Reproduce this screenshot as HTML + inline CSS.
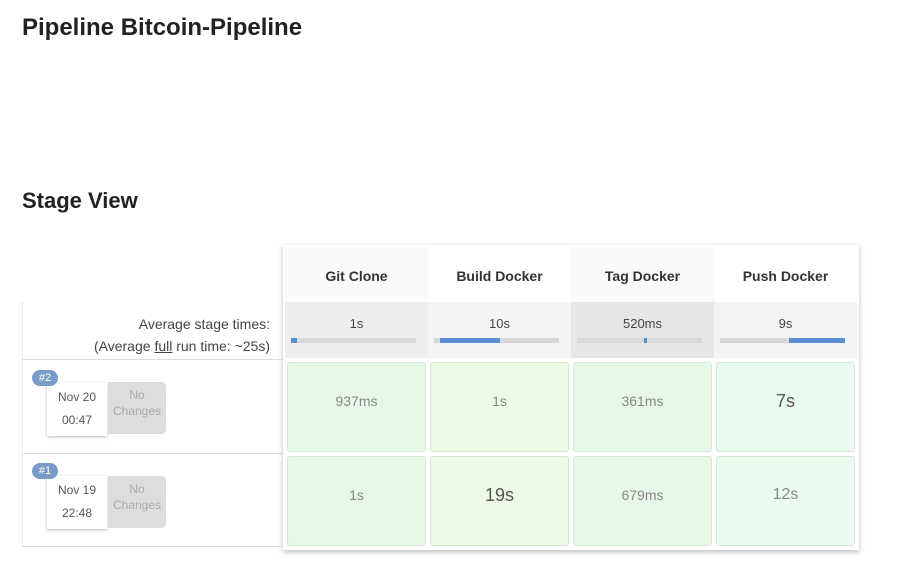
<!DOCTYPE html>
<html><head><meta charset="utf-8"><style>
body{margin:0;width:905px;height:568px;background:#fff;font-family:"Liberation Sans",sans-serif;position:relative;overflow:hidden}
.a{position:absolute}
h1{position:absolute;left:22px;top:14px;margin:0;font-size:24px;font-weight:bold;color:#222}
h2{position:absolute;left:22px;top:188px;margin:0;font-size:22px;font-weight:bold;color:#222}
.hdr{top:247px;height:55px;width:143px;text-align:center;line-height:58px;font-size:14px;font-weight:bold;color:#333;background:#fafafa}
.avg{top:302px;height:56px;width:143px;background:#eeeeee;text-align:center;font-size:13px;color:#444}
.avg .bar{position:absolute;left:6px;right:12px;top:36px;height:5px;background:#d8d8d8}
.avg .fill{position:absolute;top:0;height:5px;background:#5b8fd4}
.cell{width:137px;height:88px;border:1px solid #d8e8d8;border-radius:3px;background:#e6f9e6;text-align:center;color:#888;font-size:14px;line-height:76px}
.big{font-size:18px;color:#555}
.badge{background:#7a9bc7;color:#fff;font-size:11px;border-radius:8px;width:26px;height:16px;line-height:16px;text-align:center;z-index:2}
.date{width:60px;height:50px;background:#fff;box-shadow:0 1px 3px #bbb;font-size:12px;color:#555;text-align:center;line-height:23px;padding-top:3px}
.nc{width:58px;background:#ddd;border-radius:0 4px 4px 0;color:#aaa;font-size:12px;text-align:center}
</style></head><body>
<h1>Pipeline Bitcoin-Pipeline</h1>
<h2>Stage View</h2>
<div class="a" style="left:283px;top:245px;width:576px;height:305px;box-shadow:0 2px 5px #bbb;background:#fff"></div>
<div class="a hdr" style="left:285px">Git Clone</div>
<div class="a hdr" style="left:428px;background:#fff">Build Docker</div>
<div class="a hdr" style="left:571px">Tag Docker</div>
<div class="a hdr" style="left:714px;background:#fff">Push Docker</div>
<div class="a" style="left:22px;top:302px;width:248px;text-align:right;font-size:14px;color:#444;line-height:22px;padding-top:11px">Average stage times:<br>(Average <u>full</u> run time: ~25s)</div>
<div class="a avg" style="left:285px;line-height:44px">1s<div class="bar"><div class="fill" style="left:0;width:6px"></div></div></div>
<div class="a avg" style="left:428px;background:#f4f4f4;line-height:44px">10s<div class="bar"><div class="fill" style="left:6px;width:60px"></div></div></div>
<div class="a avg" style="left:571px;background:#e6e6e6;line-height:44px">520ms<div class="bar"><div class="fill" style="left:67px;width:3px"></div></div></div>
<div class="a avg" style="left:714px;background:#f4f4f4;line-height:44px">9s<div class="bar"><div class="fill" style="left:69px;width:56px"></div></div></div>
<div class="a" style="left:22px;top:359px;width:262px;border-top:1px solid #ddd"></div>
<div class="a" style="left:22px;top:453px;width:262px;border-top:1px solid #ddd"></div>
<div class="a" style="left:22px;top:546px;width:262px;border-top:1px solid #ddd"></div>
<div class="a" style="left:22px;top:302px;height:244px;border-left:1px dotted #ddd"></div>
<div class="a date" style="left:47px;top:383px">Nov 20<br>00:47</div>
<div class="a nc" style="left:108px;top:382px;line-height:16px;padding-top:5px;height:47px">No<br>Changes</div>
<div class="a badge" style="left:32px;top:370px">#2</div>
<div class="a date" style="left:47px;top:476px">Nov 19<br>22:48</div>
<div class="a nc" style="left:108px;top:476px;line-height:16px;padding-top:5px;height:47px">No<br>Changes</div>
<div class="a badge" style="left:32px;top:463px">#1</div>
<div class="a cell" style="left:287px;top:362px">937ms</div>
<div class="a cell" style="left:430px;top:362px;background:#eefbe4">1s</div>
<div class="a cell" style="left:573px;top:362px">361ms</div>
<div class="a cell big" style="left:716px;top:362px;background:#e9fbef">7s</div>
<div class="a cell" style="left:287px;top:456px">1s</div>
<div class="a cell big" style="left:430px;top:456px;background:#eefbe4">19s</div>
<div class="a cell" style="left:573px;top:456px">679ms</div>
<div class="a cell" style="left:716px;top:456px;background:#e9fbef;font-size:16px">12s</div>
</body></html>
